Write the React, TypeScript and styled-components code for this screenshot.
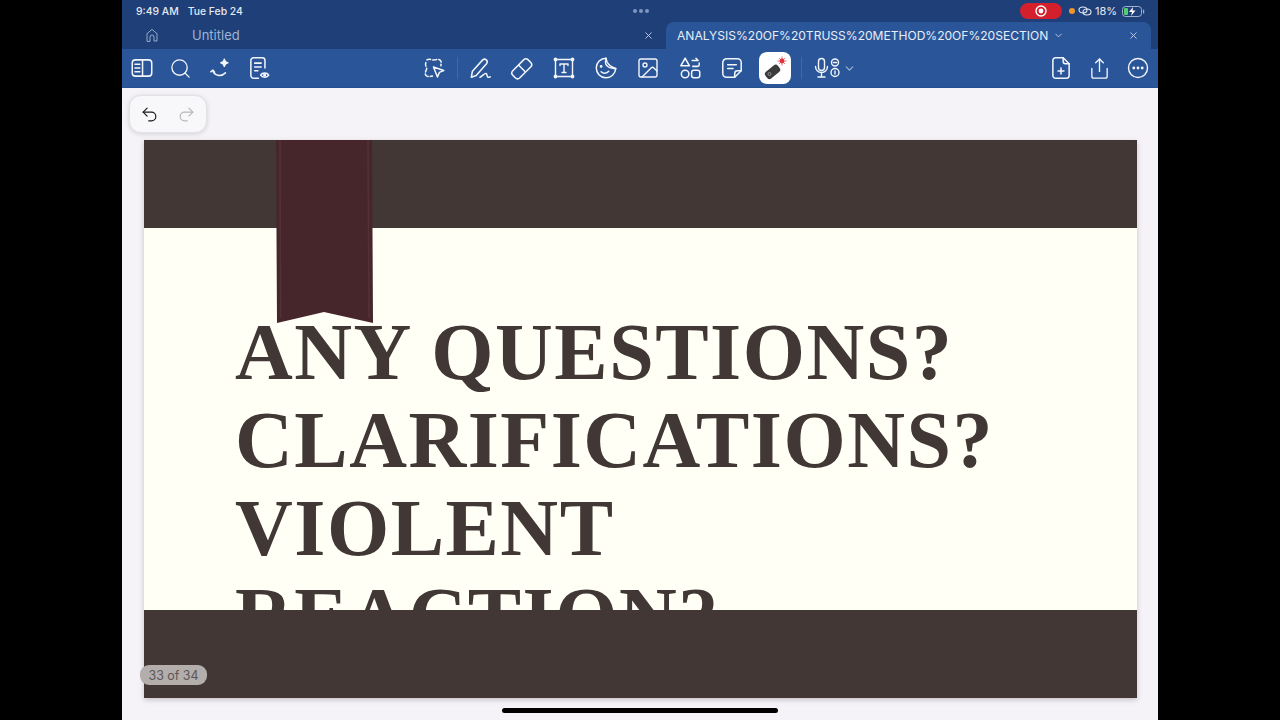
import React from 'react';
import styled, { createGlobalStyle } from 'styled-components';
import { ChevronDown, Image, Search, Share, Undo2, Redo2, X } from 'lucide-react';

const Global = createGlobalStyle`
	html, body { margin: 0; padding: 0; background: #000; }
	#root { width: 1280px; height: 720px; overflow: hidden; }
`;

const Stage = styled.div`
	width: 1280px;
	height: 720px;
	background: #000;
	display: flex;
	justify-content: center;
	font-family: Inter, 'Liberation Sans', sans-serif;
`;

const Device = styled.div`
	position: relative;
	width: 1036px;
	height: 720px;
	background: #f5f3f8;
	display: flex;
	flex-direction: column;
	overflow: hidden;
`;

const StatusBar = styled.div`
	height: 22px;
	background: #1e3f78;
	color: #e4e9f2;
	font-size: 10.4px;
	display: grid;
	grid-template-columns: 1fr auto 1fr;
	align-items: center;
	padding: 0 13px 0 14px;
`;

const Clock = styled.div`
	display: flex;
	gap: 9px;
	font-weight: 500;
`;

const Dots = styled.div`
	display: flex;
	gap: 2px;
	span {
		width: 4px;
		height: 4px;
		border-radius: 50%;
		background: #7f97c0;
	}
`;

const StatusRight = styled.div`
	display: flex;
	justify-content: flex-end;
	align-items: center;
	gap: 3px;
`;

const Percent = styled.span`
	font-size: 11px;
	margin-right: 2px;
`;

const RecPill = styled.div`
	width: 42px;
	height: 16px;
	border-radius: 8px;
	background: #d3202c;
	display: flex;
	align-items: center;
	justify-content: center;
	margin-right: 4px;
`;

const OrangeDot = styled.span`
	width: 6px;
	height: 6px;
	border-radius: 50%;
	background: #f0962c;
`;

const TabBar = styled.div`
	height: 27px;
	background: #1e3f78;
	display: flex;
	font-size: 13px;
`;

const Tab = styled.div<{ $active?: boolean }>`
	display: flex;
	align-items: center;
	height: 27px;
	box-sizing: border-box;
	background: ${(p) => (p.$active ? '#2a5699' : 'transparent')};
	color: ${(p) => (p.$active ? '#e8edf6' : '#9fb3d3')};
	border-radius: ${(p) => (p.$active ? '8px 8px 0 0' : '0')};
`;

const HomeTab = styled(Tab)`
	width: 70px;
	padding-left: 22px;
	padding-bottom: 1px;
`;

const PlainTab = styled(Tab)`
	width: 474px;
	justify-content: space-between;
	padding-right: 12px;
	padding-bottom: 1px;
`;

const ActiveTab = styled(Tab)`
	width: 485px;
	padding: 0 12px 0 11px;
	font-size: 12.05px;
	justify-content: space-between;
`;

const TabTitle = styled.div`
	display: flex;
	align-items: center;
	gap: 5px;
	white-space: nowrap;
`;

const Toolbar = styled.div`
	height: 39px;
	background: #2a5699;
	border-bottom: 1px solid #24508f;
	box-sizing: border-box;
	display: grid;
	grid-template-columns: 1fr auto 1fr;
	align-items: center;
	padding: 0 1px 0 0;
	color: #f2f5fa;
`;

const ToolGroup = styled.div<{ $end?: boolean; $trail?: number }>`
	display: flex;
	align-items: center;
	justify-content: ${(p) => (p.$end ? 'flex-end' : 'flex-start')};
	padding-right: ${(p) => p.$trail ?? 0}px;
`;

const ToolSlot = styled.div<{ $width?: number }>`
	width: ${(p) => p.$width ?? 39}px;
	height: 32px;
	display: flex;
	align-items: center;
	justify-content: center;
`;

const Divider = styled.div<{ $before: number; $after: number }>`
	width: 1px;
	height: 22px;
	background: #3e68a6;
	margin: 0 ${(p) => p.$after}px 0 ${(p) => p.$before}px;
`;

const ActiveTool = styled.div`
	width: 32px;
	height: 32px;
	margin: 0 5px 0 6px;
	border-radius: 8px;
	background: #fff;
	display: flex;
	align-items: center;
	justify-content: center;
`;

const Canvas = styled.main`
	flex: 1;
	min-height: 0;
	padding: 52px 21px 0 22px;
`;

const Slide = styled.section`
	width: 993px;
	height: 558px;
	background: #fffff6;
	display: flex;
	flex-direction: column;
	box-shadow: 0 2px 5px rgba(60, 50, 60, 0.25);
`;

const Band = styled.div`
	height: 88px;
	background: #423735;
	flex: none;
`;

const SlideBody = styled.div`
	flex: 1;
	min-height: 0;
	overflow: hidden;
	padding: 80px 0 0 91px;
`;

const Heading = styled.h1`
	margin: 0;
	width: 800px;
	font-family: 'Liberation Serif', 'Times New Roman', serif;
	font-weight: 700;
	font-size: 80px;
	letter-spacing: 1.5px;
	line-height: 88px;
	color: #413734;
`;

const Ribbon = styled.svg`
	position: absolute;
	left: 153px;
	top: 140px;
`;

const UndoPill = styled.div`
	position: absolute;
	left: 7px;
	top: 95px;
	width: 78px;
	height: 38px;
	box-sizing: border-box;
	border: 1px solid #e3e1e6;
	border-radius: 12px;
	background: #f8f7fa;
	box-shadow: 0 1px 5px rgba(0, 0, 0, 0.14);
	display: flex;
	align-items: center;
	justify-content: center;
	gap: 18px;
`;

const PageCount = styled.div`
	position: absolute;
	left: 18px;
	top: 665px;
	width: 67px;
	height: 20px;
	border-radius: 9px;
	background: #b3adac;
	color: #5b5655;
	font-size: 12.4px;
	display: flex;
	align-items: center;
	justify-content: center;
`;

const HomeIndicator = styled.div`
	position: absolute;
	left: 380px;
	top: 708px;
	width: 276px;
	height: 5px;
	border-radius: 3px;
	background: #000;
`;

const Ico = ({ children, size = 26 }: { children: React.ReactNode; size?: number }) => (
	<svg width={size} height={size} viewBox="0 0 24 24" fill="none" stroke="currentColor" strokeWidth="1.4" strokeLinecap="round" strokeLinejoin="round">
		{children}
	</svg>
);

export default function App() {
	return (
		<Stage>
			<Global />
			<Device>
				<StatusBar>
					<Clock>
						<span>9:49 AM</span>
						<span>Tue Feb 24</span>
					</Clock>
					<Dots>
						<span />
						<span />
						<span />
					</Dots>
					<StatusRight>
						<RecPill>
							<svg width="12" height="12" viewBox="0 0 12 12">
								<circle cx="6" cy="6" r="5" fill="none" stroke="#fff" strokeWidth="1.4" />
								<circle cx="6" cy="6" r="2.4" fill="#fff" />
							</svg>
						</RecPill>
						<OrangeDot />
						<svg width="14" height="10" viewBox="0 0 14 10" fill="none" stroke="#e4e9f2" strokeWidth="1.1">
							<ellipse cx="5" cy="4" rx="4" ry="3" />
							<ellipse cx="9" cy="6" rx="4" ry="3" />
						</svg>
						<Percent>18%</Percent>
						<svg width="23" height="11" viewBox="0 0 23 11">
							<rect x="0.5" y="0.5" width="19" height="10" rx="3" fill="none" stroke="#9fb0cc" />
							<rect x="2" y="2" width="4" height="7" rx="1" fill="#4fd06a" />
							<path d="M11 1 L7 6 H10 L9 10 L13.5 4.6 H10.5 Z" fill="#fff" />
							<rect x="21" y="3.5" width="1.2" height="4" rx="0.6" fill="#9fb0cc" />
						</svg>
					</StatusRight>
				</StatusBar>

				<TabBar>
					<HomeTab>
						<Ico size={16}>
							<path d="M4.500 21V10L12 3.500l7.500 6.500v11h-4.500v-6a3 3 0 0 0-6 0v6Z" />
						</Ico>
					</HomeTab>
					<PlainTab>
						<span>Untitled</span>
						<X size={11} color="#c4d0e4" />
					</PlainTab>
					<ActiveTab $active>
						<TabTitle>
							ANALYSIS%20OF%20TRUSS%20METHOD%20OF%20SECTION
							<ChevronDown size={11} color="#c4d0e4" />
						</TabTitle>
						<X size={11} color="#c4d0e4" />
					</ActiveTab>
				</TabBar>

				<Toolbar>
					<ToolGroup>
						<ToolSlot>
							<Ico>
								<rect x="3" y="4.500" width="18" height="15" rx="3" />
								<path d="M12.500 4.500v15M5.500 8.500h4.500M5.500 12h4.500M5.500 15.500h4.500" />
							</Ico>
						</ToolSlot>
						<ToolSlot>
							<Search size={23} strokeWidth={1.4} />
						</ToolSlot>
						<ToolSlot>
							<Ico>
								<path d="M5.500 14.500c1 4.500 7.500 6 11.500 2" />
								<path d="m3.500 15.500 2-1.500 1.500 1.800" />
								<path d="M16 4c.3 2 1.200 2.900 3.200 3.200-2 .3-2.900 1.200-3.200 3.200-.3-2-1.200-2.900-3.200-3.200C14.800 6.900 15.700 6 16 4Z" fill="currentColor" />
							</Ico>
						</ToolSlot>
						<ToolSlot>
							<Ico>
								<path d="M11.500 21.500H7a2.500 2.500 0 0 1-2.500-2.500V5A2.500 2.500 0 0 1 7 2.500h8A2.500 2.500 0 0 1 17.500 5v7" />
								<path d="M8 7.500h6M8 11h6M8 14.500h3" />
								<path d="M13.500 18.500c1.500-2.600 6-2.600 7.500 0-1.500 2.600-6 2.600-7.500 0Z" />
								<circle cx="17.200" cy="18.500" r="0.800" />
							</Ico>
						</ToolSlot>
					</ToolGroup>

					<ToolGroup $trail={12}>
						<ToolSlot $width={42}>
							<Ico>
								<path d="M5.500 4.500c2.500-1.500 4.500.5 7 0s5-1 6 1.500c.5 1.500-.5 2.500 0 4" strokeDasharray="3.500 2" />
								<path d="M4.500 7c-1.500 3 1.500 4 .5 6.500s-2 4.500.5 6c2 1 3.500 0 5 0" strokeDasharray="3.500 2" />
								<path d="m11.500 11 9.500 3.300-4 1.700-1.800 4.300Z" />
							</Ico>
						</ToolSlot>
						<Divider $before={2} $after={1} />
						<ToolSlot $width={42}>
							<Ico>
								<path d="M4 20.500 5 15 14.500 4.500a2.500 2.500 0 0 1 3.700 3.300L8.500 19Z" />
								<path d="M12 20.500c2-.5 4-4 5.500-3.500s.5 3 2 3.500 1.500-.5 2-.5" />
							</Ico>
						</ToolSlot>
						<ToolSlot $width={42}>
							<Ico>
								<path d="m3.500 14.500 10-10a3 3 0 0 1 4.200 0l2.300 2.300a3 3 0 0 1 0 4.200l-10 10a3 3 0 0 1-4.200 0l-2.300-2.300a3 3 0 0 1 0-4.200Z" />
								<path d="m9 9.500 5.500 5.500" />
							</Ico>
						</ToolSlot>
						<ToolSlot $width={42}>
							<Ico size={24}>
								<rect x="3.500" y="3.500" width="17" height="17" />
								<circle cx="3.500" cy="3.500" r="1.200" />
								<circle cx="20.500" cy="3.500" r="1.200" />
								<circle cx="3.500" cy="20.500" r="1.200" />
								<circle cx="20.500" cy="20.500" r="1.200" />
								<path d="M8 9.500V8h8v1.500M12 8v8.500M10 16.500h4" />
							</Ico>
						</ToolSlot>
						<ToolSlot $width={42}>
							<Ico>
								<path d="M12 3a9 9 0 1 0 9 9.500c-2 .5-2.500-.5-3.500-.5-3 0-6-2.500-6-5.500 0-1.500 1-2 .5-3.500Z" />
								<path d="M12 3c.5 4.500 4 8.500 9 9.500" />
								<circle cx="7.500" cy="10.500" r="0.600" />
								<path d="M7.500 15.500c2 1.800 5 1.800 7-.5" />
							</Ico>
						</ToolSlot>
						<ToolSlot $width={42}>
							<Image size={24} strokeWidth={1.4} />
						</ToolSlot>
						<ToolSlot $width={42}>
							<Ico>
								<path d="M7.500 3 11.500 10h-8Z" />
								<rect x="13.500" y="14" width="7.500" height="7" rx="2" />
								<circle cx="7.500" cy="17.500" r="3.500" />
								<path d="M14 5h5.500l-2-2M20.500 7.500v1.500a1.500 1.500 0 0 1-1.500 1.500h-4.500" />
							</Ico>
						</ToolSlot>
						<ToolSlot $width={42}>
							<Ico>
								<path d="M14.500 20.500H7A3.500 3.500 0 0 1 3.500 17V7A3.500 3.500 0 0 1 7 3.500h10A3.500 3.500 0 0 1 20.500 7v7.500Z" />
								<path d="M8 9h8M8 12.500h5M14.500 20.500V17a2.500 2.500 0 0 1 2.500-2.500h3.500" />
							</Ico>
						</ToolSlot>
						<ActiveTool>
							<svg width="26" height="26" viewBox="0 0 26 26">
								<rect x="2.500" y="13" width="16" height="8.500" rx="3" transform="rotate(-40 10 17)" fill="#3b3b3d" />
								<circle cx="7.500" cy="19" r="1.500" fill="none" stroke="#aaa" strokeWidth="0.7" />
								<circle cx="20" cy="6" r="2.400" fill="#e2323f" />
								<path d="M20 1.500v9M15.500 6h9M17 3l6 6M23 3l-6 6" stroke="#e2323f" strokeWidth="0.7" />
							</svg>
						</ActiveTool>
						<Divider $before={5} $after={9} />
						<ToolSlot $width={34}>
							<svg width="28" height="24" viewBox="0 0 28 24" fill="none" stroke="currentColor" strokeWidth="1.4" strokeLinecap="round">
								<rect x="4.500" y="2.500" width="6" height="12" rx="3" />
								<path d="M1.500 10.500a6 6 0 0 0 12 0M7.500 16.500v4M4 21h7" />
								<circle cx="21" cy="6.500" r="3.500" />
								<circle cx="21" cy="16.500" r="4" />
								<path d="M19.500 6.500h3M21 15v3" />
							</svg>
						</ToolSlot>
						<ToolSlot $width={10}>
							<ChevronDown size={13} color="#9fb5d6" style={{ flex: 'none' }} />
						</ToolSlot>
					</ToolGroup>

					<ToolGroup $end>
						<ToolSlot>
							<Ico>
								<path d="M14 2.500H7A2.500 2.500 0 0 0 4.500 5v14A2.500 2.500 0 0 0 7 21.500h10a2.500 2.500 0 0 0 2.500-2.500V8Z" />
								<path d="M14 2.500v3.500A2 2 0 0 0 16 8h3.500M12 12v5.500M9.250 14.750h5.500" />
							</Ico>
						</ToolSlot>
						<ToolSlot>
							<Share size={23} strokeWidth={1.4} />
						</ToolSlot>
						<ToolSlot $width={38}>
							<svg width="22" height="22" viewBox="0 0 22 22">
								<circle cx="11" cy="11" r="9.500" fill="none" stroke="currentColor" strokeWidth="1.400" />
								<circle cx="6.800" cy="11" r="1.400" fill="currentColor" />
								<circle cx="11" cy="11" r="1.400" fill="currentColor" />
								<circle cx="15.200" cy="11" r="1.400" fill="currentColor" />
							</svg>
						</ToolSlot>
					</ToolGroup>
				</Toolbar>

				<Canvas>
					<Slide>
						<Band />
						<SlideBody>
							<Heading>
								ANY QUESTIONS?
								<br />
								CLARIFICATIONS?
								<br />
								VIOLENT
								<br />
								REACTION?
							</Heading>
						</SlideBody>
						<Band />
					</Slide>
				</Canvas>

				<Ribbon width="98" height="184" viewBox="0 0 98 184">
					<path d="M1 0H97L98 183 49 172 2 183Z" fill="#47262b" />
					<path d="M5 0 5.500 178M93 0 94 178" stroke="#533237" strokeWidth="1.500" />
				</Ribbon>

				<UndoPill>
					<Undo2 size={19} color="#1a1a1a" strokeWidth={1.5} />
					<Redo2 size={19} color="#b7b7ba" strokeWidth={1.5} />
				</UndoPill>
				<PageCount>33 of 34</PageCount>
				<HomeIndicator />
			</Device>
		</Stage>
	);
}
